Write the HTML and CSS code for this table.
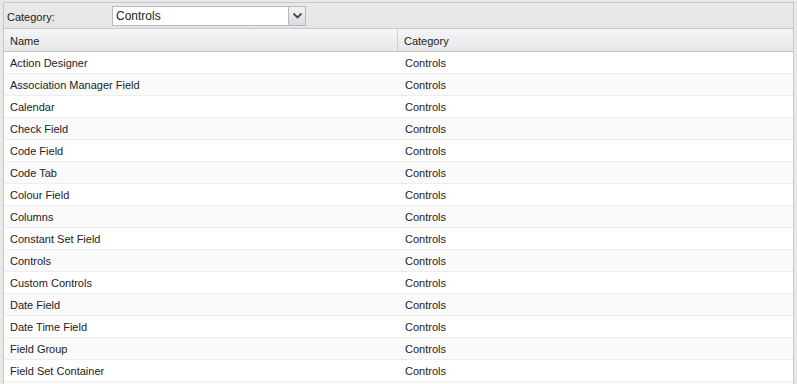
FILE: index.html
```html
<!DOCTYPE html>
<html>
<head>
<meta charset="utf-8">
<link rel="stylesheet" href="styles.css">
</head>
<body>
<div class="frame">
  <div class="panel">
    <div class="toolbar">
      <span class="label">Category:</span>
      <div class="combo">
        <div class="combo-input">Controls</div>
        <div class="combo-trigger">
          <svg width="9" height="6" viewBox="0 0 9 6"><path d="M0.5 0.5 L4.5 4.5 L8.5 0.5" fill="none" stroke="#444" stroke-width="1.8"/></svg>
        </div>
      </div>
    </div>
    <div class="header">
      <div class="hcell col-name">Name</div>
      <div class="hcell col-cat">Category</div>
    </div>
    <div class="rows">
      <div class="row"><div class="cell col-name">Action Designer</div><div class="cell col-cat">Controls</div></div>
      <div class="row alt"><div class="cell col-name">Association Manager Field</div><div class="cell col-cat">Controls</div></div>
      <div class="row"><div class="cell col-name">Calendar</div><div class="cell col-cat">Controls</div></div>
      <div class="row alt"><div class="cell col-name">Check Field</div><div class="cell col-cat">Controls</div></div>
      <div class="row"><div class="cell col-name">Code Field</div><div class="cell col-cat">Controls</div></div>
      <div class="row alt"><div class="cell col-name">Code Tab</div><div class="cell col-cat">Controls</div></div>
      <div class="row"><div class="cell col-name">Colour Field</div><div class="cell col-cat">Controls</div></div>
      <div class="row alt"><div class="cell col-name">Columns</div><div class="cell col-cat">Controls</div></div>
      <div class="row"><div class="cell col-name">Constant Set Field</div><div class="cell col-cat">Controls</div></div>
      <div class="row alt"><div class="cell col-name">Controls</div><div class="cell col-cat">Controls</div></div>
      <div class="row"><div class="cell col-name">Custom Controls</div><div class="cell col-cat">Controls</div></div>
      <div class="row alt"><div class="cell col-name">Date Field</div><div class="cell col-cat">Controls</div></div>
      <div class="row"><div class="cell col-name">Date Time Field</div><div class="cell col-cat">Controls</div></div>
      <div class="row alt"><div class="cell col-name">Field Group</div><div class="cell col-cat">Controls</div></div>
      <div class="row"><div class="cell col-name">Field Set Container</div><div class="cell col-cat">Controls</div></div>
      <div class="row alt"></div>
    </div>
  </div>
</div>
</body>
</html>
```
FILE: styles.css
```css
html, body {
  margin: 0;
  padding: 0;
  height: 100%;
  overflow: hidden;
  background: #e8e8e8;
}
body {
  font-family: "Liberation Sans", Arial, sans-serif;
  font-size: 11px;
  color: #222;
}
.frame {
  padding: 2px 3px 0 3px;
  height: 100%;
  box-sizing: border-box;
}
.panel {
  border: 1px solid #c8c8c8;
  border-bottom: none;
  background: #fff;
  height: 100%;
  box-sizing: border-box;
  overflow: hidden;
}
.toolbar {
  height: 26px;
  box-sizing: border-box;
  display: flex;
  align-items: center;
  padding-left: 3px;
  background: linear-gradient(#e9e9e9, #e6e6e6);
  border-bottom: 1px solid #c8c8c8;
}
.label {
  width: 105px;
  padding-top: 2px;
}
.combo {
  display: flex;
  height: 20px;
}
.combo-input {
  width: 177px;
  box-sizing: border-box;
  height: 20px;
  border: 1px solid #b5b8c8;
  background: #fff;
  font-size: 12px;
  padding: 1px 0 0 3px;
  line-height: 16px;
}
.combo-trigger {
  width: 17px;
  height: 20px;
  box-sizing: border-box;
  border: 1px solid #b5b8c8;
  border-left: none;
  background: linear-gradient(#f4f4f4, #dcdcdc);
  display: flex;
  align-items: center;
  justify-content: center;
}
.header {
  display: flex;
  height: 23px;
  box-sizing: border-box;
  background: linear-gradient(#f6f6f8, #e7e7ea);
  border-bottom: 1px solid #c5c5c5;
}
.hcell {
  line-height: 22px;
  padding-left: 6px;
  padding-top: 1px;
  box-sizing: border-box;
}
.col-name {
  width: 394px;
  flex: none;
}
.hcell.col-name {
  border-right: 1px solid #d0d0d0;
}
.col-cat {
  flex: 1;
}
.row {
  display: flex;
  height: 22px;
  box-sizing: border-box;
  border-bottom: 1px solid #ededed;
  background: #fff;
}
.row.alt {
  background: #fafafa;
}
.cell {
  line-height: 21px;
  padding-left: 6px;
  padding-top: 1px;
  box-sizing: border-box;
}
.cell.col-name {
  width: 395px;
}
```
